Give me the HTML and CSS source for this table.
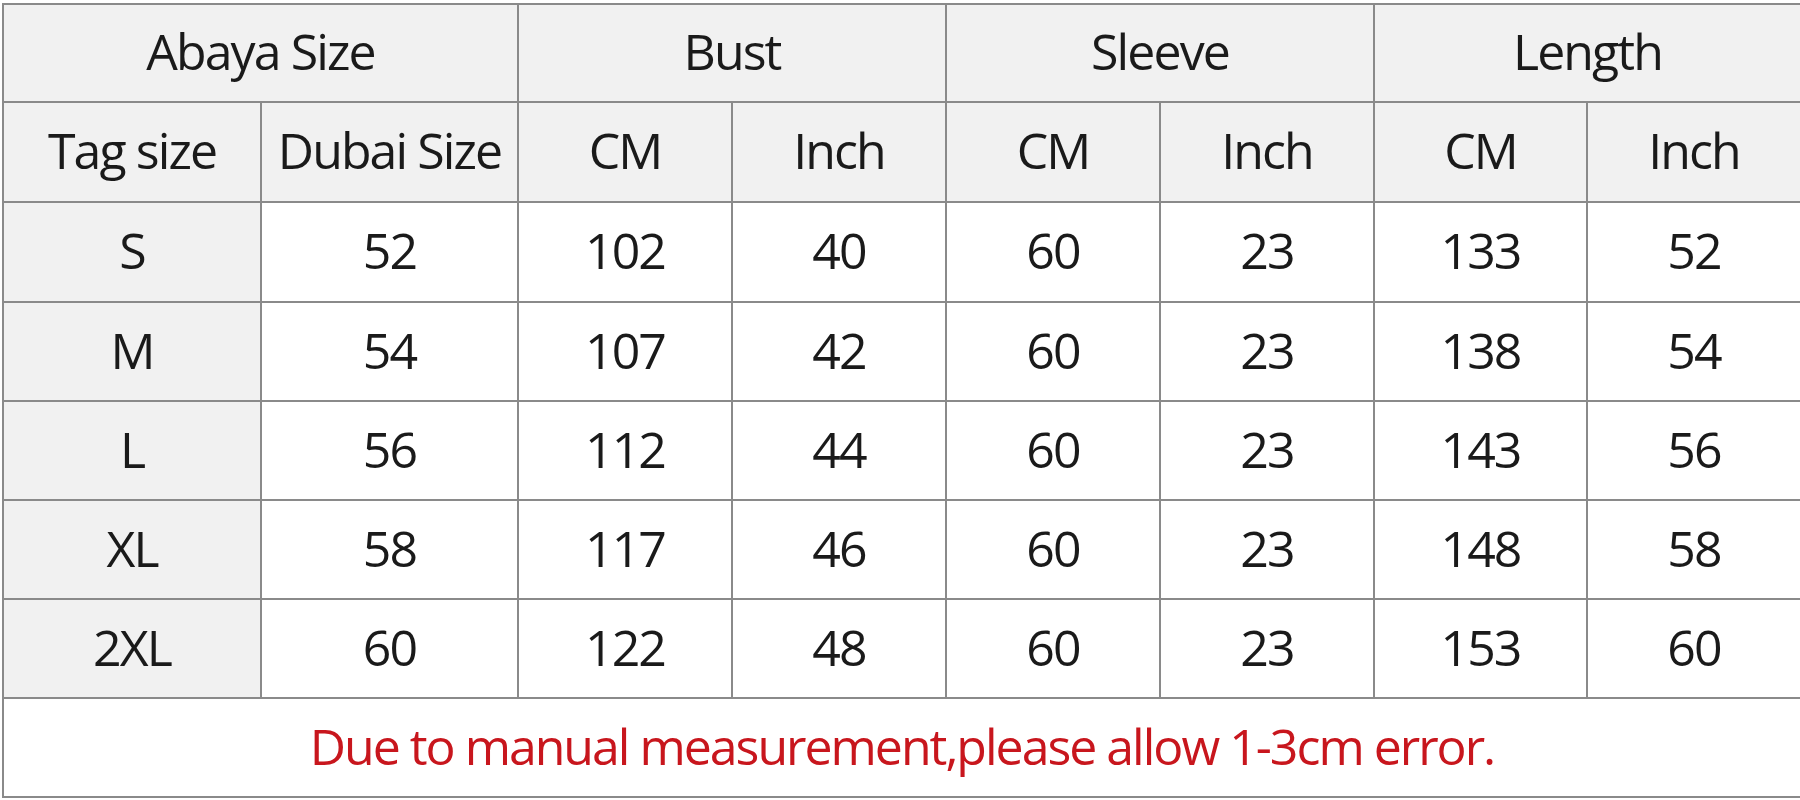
FILE: index.html
```html
<!DOCTYPE html>
<html lang="en">
<head>
<meta charset="utf-8">
<title>Abaya Size Chart</title>
<link rel="stylesheet" href="styles.css">
</head>
<body>
<div class="chart">
  <div class="cell head span2">Abaya Size</div>
  <div class="cell head span2">Bust</div>
  <div class="cell head span2">Sleeve</div>
  <div class="cell head span2">Length</div>

  <div class="cell head">Tag size</div>
  <div class="cell head">Dubai Size</div>
  <div class="cell head">CM</div>
  <div class="cell head">Inch</div>
  <div class="cell head">CM</div>
  <div class="cell head">Inch</div>
  <div class="cell head">CM</div>
  <div class="cell head">Inch</div>

  <div class="cell head">S</div>
  <div class="cell">52</div><div class="cell">102</div><div class="cell">40</div><div class="cell">60</div><div class="cell">23</div><div class="cell">133</div><div class="cell">52</div>

  <div class="cell head">M</div>
  <div class="cell">54</div><div class="cell">107</div><div class="cell">42</div><div class="cell">60</div><div class="cell">23</div><div class="cell">138</div><div class="cell">54</div>

  <div class="cell head">L</div>
  <div class="cell">56</div><div class="cell">112</div><div class="cell">44</div><div class="cell">60</div><div class="cell">23</div><div class="cell">143</div><div class="cell">56</div>

  <div class="cell head">XL</div>
  <div class="cell">58</div><div class="cell">117</div><div class="cell">46</div><div class="cell">60</div><div class="cell">23</div><div class="cell">148</div><div class="cell">58</div>

  <div class="cell head">2XL</div>
  <div class="cell">60</div><div class="cell">122</div><div class="cell">48</div><div class="cell">60</div><div class="cell">23</div><div class="cell">153</div><div class="cell">60</div>

  <div class="cell note">Due to manual measurement,please allow 1-3cm error.</div>
</div>
</body>
</html>
```

FILE: styles.css
```css
html, body {
  margin: 0;
  padding: 0;
  background: #ffffff;
  overflow: hidden;
  width: 1800px;
  height: 800px;
}

.chart {
  display: grid;
  width: max-content;
  margin: 3px 0 0 2px;
  padding: 2px;
  gap: 2px;
  background: #8a8a8a;
  grid-template-columns: 256px 255px 212px 212px 212px 212px 211px 212px;
  grid-template-rows: 96px 98px 98px 97px 97px 97px 97px 97px;
  font-family: "Open Sans", "Noto Sans", sans-serif;
  font-size: 50px;
  letter-spacing: -1.9px;
  color: #1a1a1a;
}

.cell {
  display: flex;
  align-items: center;
  justify-content: center;
  padding-bottom: 4px;
  background: #ffffff;
  line-height: 1;
  white-space: nowrap;
}

.head {
  background: #f1f1f1;
}

.span2 {
  grid-column: span 2;
}

.note {
  grid-column: 1 / -1;
  color: #c8161d;
  letter-spacing: -2px;
}
```
